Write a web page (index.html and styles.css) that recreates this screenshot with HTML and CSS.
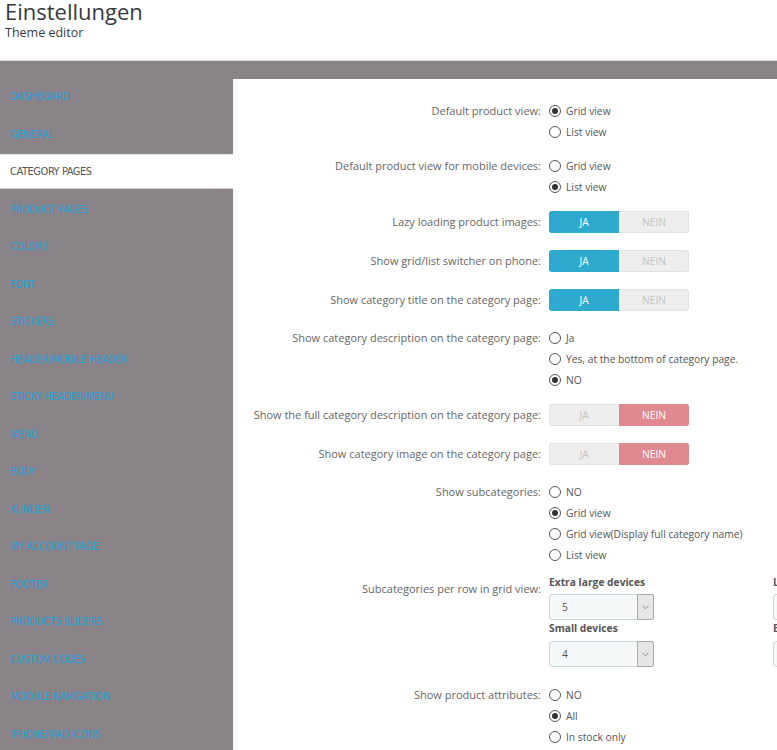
FILE: index.html
```html
<!DOCTYPE html>
<html lang="de">
<head>
<meta charset="utf-8">
<title>Einstellungen - Theme editor</title>
<link rel="stylesheet" href="styles.css">
</head>
<body>
<header class="page-head">
  <h1 class="page-title">Einstellungen</h1>
  <div class="page-sub">Theme editor</div>
</header>
<div class="wrap">
  <nav class="sidebar">
    <a class="nav-item">DASHBOARD</a>
    <a class="nav-item">GENERAL</a>
    <a class="nav-item active">CATEGORY PAGES</a>
    <a class="nav-item">PRODUCT PAGES</a>
    <a class="nav-item">COLORS</a>
    <a class="nav-item">FONT</a>
    <a class="nav-item">STICKERS</a>
    <a class="nav-item">HEADER/MOBILE HEADER</a>
    <a class="nav-item">STICKY HEADER/MENU</a>
    <a class="nav-item">MENÜ</a>
    <a class="nav-item">BODY</a>
    <a class="nav-item">KUNDEN</a>
    <a class="nav-item">MY ACCOUNT PAGE</a>
    <a class="nav-item">FOOTER</a>
    <a class="nav-item">PRODUCTS SLIDERS</a>
    <a class="nav-item">CUSTOM CODES</a>
    <a class="nav-item">MODULE NAVIGATION</a>
    <a class="nav-item">IPHONE/IPAD ICONS</a>
  </nav>
  <main class="panel">
    <div class="row">
      <div class="label">Default product view:</div>
      <div class="options">
        <div class="opt"><span class="radio checked"></span>Grid view</div>
        <div class="opt"><span class="radio"></span>List view</div>
      </div>
    </div>
    <div class="row">
      <div class="label">Default product view for mobile devices:</div>
      <div class="options">
        <div class="opt"><span class="radio"></span>Grid view</div>
        <div class="opt"><span class="radio checked"></span>List view</div>
      </div>
    </div>
    <div class="row row-switch">
      <div class="label">Lazy loading product images:</div>
      <div class="switch"><span class="sw on-yes">JA</span><span class="sw off">NEIN</span></div>
    </div>
    <div class="row row-switch">
      <div class="label">Show grid/list switcher on phone:</div>
      <div class="switch"><span class="sw on-yes">JA</span><span class="sw off">NEIN</span></div>
    </div>
    <div class="row row-switch">
      <div class="label">Show category title on the category page:</div>
      <div class="switch"><span class="sw on-yes">JA</span><span class="sw off">NEIN</span></div>
    </div>
    <div class="row">
      <div class="label">Show category description on the category page:</div>
      <div class="options">
        <div class="opt"><span class="radio"></span>Ja</div>
        <div class="opt"><span class="radio"></span>Yes, at the bottom of category page.</div>
        <div class="opt"><span class="radio checked"></span>NO</div>
      </div>
    </div>
    <div class="row row-switch">
      <div class="label">Show the full category description on the category page:</div>
      <div class="switch"><span class="sw off">JA</span><span class="sw on-no">NEIN</span></div>
    </div>
    <div class="row row-switch">
      <div class="label">Show category image on the category page:</div>
      <div class="switch"><span class="sw off">JA</span><span class="sw on-no">NEIN</span></div>
    </div>
    <div class="row row-tight">
      <div class="label">Show subcategories:</div>
      <div class="options">
        <div class="opt"><span class="radio"></span>NO</div>
        <div class="opt"><span class="radio checked"></span>Grid view</div>
        <div class="opt"><span class="radio"></span>Grid view(Display full category name)</div>
        <div class="opt"><span class="radio"></span>List view</div>
      </div>
    </div>
    <div class="row row-selects">
      <div class="label label-sel">Subcategories per row in grid view:</div>
      <div class="sel-grid">
        <div class="sel-col">
          <div class="sel-label">Extra large devices</div>
          <div class="select"><span class="sel-val">5</span><span class="sel-btn"><svg width="7" height="5" viewBox="0 0 7 5"><path d="M0.5 0.8 L3.5 3.8 L6.5 0.8" fill="none" stroke="#888" stroke-width="1"/></svg></span></div>
        </div>
        <div class="sel-col">
          <div class="sel-label">Large devices</div>
          <div class="select"><span class="sel-val">4</span><span class="sel-btn"><svg width="7" height="5" viewBox="0 0 7 5"><path d="M0.5 0.8 L3.5 3.8 L6.5 0.8" fill="none" stroke="#888" stroke-width="1"/></svg></span></div>
        </div>
        <div class="sel-col">
          <div class="sel-label">Medium devices</div>
          <div class="select"><span class="sel-val">4</span><span class="sel-btn"><svg width="7" height="5" viewBox="0 0 7 5"><path d="M0.5 0.8 L3.5 3.8 L6.5 0.8" fill="none" stroke="#888" stroke-width="1"/></svg></span></div>
        </div>
        <div class="sel-col sel-small">
          <div class="sel-label">Small devices</div>
          <div class="select"><span class="sel-val">4</span><span class="sel-btn"><svg width="7" height="5" viewBox="0 0 7 5"><path d="M0.5 0.8 L3.5 3.8 L6.5 0.8" fill="none" stroke="#888" stroke-width="1"/></svg></span></div>
        </div>
        <div class="sel-col sel-small">
          <div class="sel-label">Extra small devices</div>
          <div class="select"><span class="sel-val">3</span><span class="sel-btn"><svg width="7" height="5" viewBox="0 0 7 5"><path d="M0.5 0.8 L3.5 3.8 L6.5 0.8" fill="none" stroke="#888" stroke-width="1"/></svg></span></div>
        </div>
      </div>
    </div>
    <div class="row">
      <div class="label">Show product attributes:</div>
      <div class="options">
        <div class="opt"><span class="radio"></span>NO</div>
        <div class="opt"><span class="radio checked"></span>All</div>
        <div class="opt"><span class="radio"></span>In stock only</div>
      </div>
    </div>
  </main>
</div>
</body>
</html>
```

FILE: styles.css
```css
html, body {
  margin: 0;
  padding: 0;
  overflow: hidden;
  background: #ffffff;
  font-family: "Open Sans", "Liberation Sans", sans-serif;
}

.page-head {
  display: flow-root;
  height: 61px;
  box-sizing: border-box;
  border-bottom: 1px solid #dcdcdc;
  padding-left: 5px;
}

.page-title {
  margin: 0;
  font-size: 22px;
  font-weight: 400;
  line-height: 24px;
  color: #363a41;
  margin-top: -1px;
}

.page-sub {
  font-size: 12.5px;
  line-height: 16px;
  color: #363a41;
  margin-top: 2px;
}

.wrap {
  background: #8a8489;
  padding-top: 18px;
  display: flex;
  align-items: stretch;
  min-height: 700px;
}

.sidebar {
  width: 233px;
  flex: none;
  display: flex;
  flex-direction: column;
}

.nav-item {
  display: flex;
  align-items: center;
  height: 35px;
  margin-bottom: 2.5px;
  padding-left: 10px;
  font-family: "DejaVu Sans Condensed", "DejaVu Sans", sans-serif;
  font-stretch: condensed;
  font-size: 11px;
  color: #279fd4;
  letter-spacing: -0.45px;
  white-space: nowrap;
}

.nav-item.active {
  background: #ffffff;
  color: #555555;
  border-top: 1px solid #e4e4e4;
  border-bottom: 1px solid #cfcfcf;
  box-sizing: border-box;
}

.panel {
  flex: 1;
  min-width: 0;
  background: #ffffff;
  padding-top: 21px;
  overflow: hidden;
}

.row {
  display: grid;
  grid-template-columns: 308px auto;
  column-gap: 8px;
  margin-bottom: 13px;
  font-size: 11px;
}

.label {
  text-align: right;
  color: #666666;
  line-height: 21px;
  white-space: nowrap;
}

.row-switch .label {
  line-height: 24px;
}

.row-switch {
  height: 26px;
}

.row-tight {
  margin-bottom: 9px;
}

.options {
  display: flex;
  flex-direction: column;
}

.opt {
  display: flex;
  align-items: center;
  height: 21px;
  gap: 5px;
  color: #555555;
  font-size: 10.25px;
  white-space: nowrap;
}

.radio {
  width: 12px;
  height: 12px;
  flex: none;
  box-sizing: border-box;
  border: 1px solid #555555;
  border-radius: 50%;
  display: inline-flex;
  align-items: center;
  justify-content: center;
  background: #ffffff;
}

.radio.checked::after {
  content: "";
  width: 6px;
  height: 6px;
  border-radius: 50%;
  background: #333333;
}

.switch {
  margin-top: 1px;
  width: 140px;
  height: 22px;
  display: flex;
  border-radius: 3px;
  overflow: hidden;
  background: #eeeeee;
  box-shadow: inset 0 0 0 1px #e2e2e2;
}

.sw {
  flex: 1;
  display: flex;
  align-items: center;
  justify-content: center;
  font-size: 10.25px;
}

.sw.on-yes {
  background: #2eaacf;
  color: #ffffff;
}

.sw.on-no {
  background: #e08a90;
  color: #ffffff;
}

.sw.off {
  color: #c4c4c4;
}

.row-selects {
  margin-bottom: 17px;
}

.label-sel {
  padding-top: 4px;
}

.sel-grid {
  display: grid;
  grid-template-columns: repeat(3, 224px);
}

.sel-label {
  font-weight: 700;
  font-size: 10.25px;
  color: #555555;
  line-height: 16px;
  white-space: nowrap;
}

.select {
  margin-top: 4px;
  width: 105px;
  height: 26px;
  box-sizing: border-box;
  border: 1px solid #cdd8dc;
  border-radius: 3px;
  background: #f5f8f9;
  display: flex;
  align-items: stretch;
}

.sel-small .select {
  margin-top: 5px;
}

.sel-val {
  flex: 1;
  padding-left: 12px;
  display: flex;
  align-items: center;
  color: #555555;
  font-size: 10.25px;
}

.sel-btn {
  width: 15px;
  background: #e6e6e6;
  border: 1px solid #a9a9a9;
  border-radius: 0 2px 2px 0;
  margin: -1px -1px -1px 0;
  display: flex;
  align-items: center;
  justify-content: center;
}
```
